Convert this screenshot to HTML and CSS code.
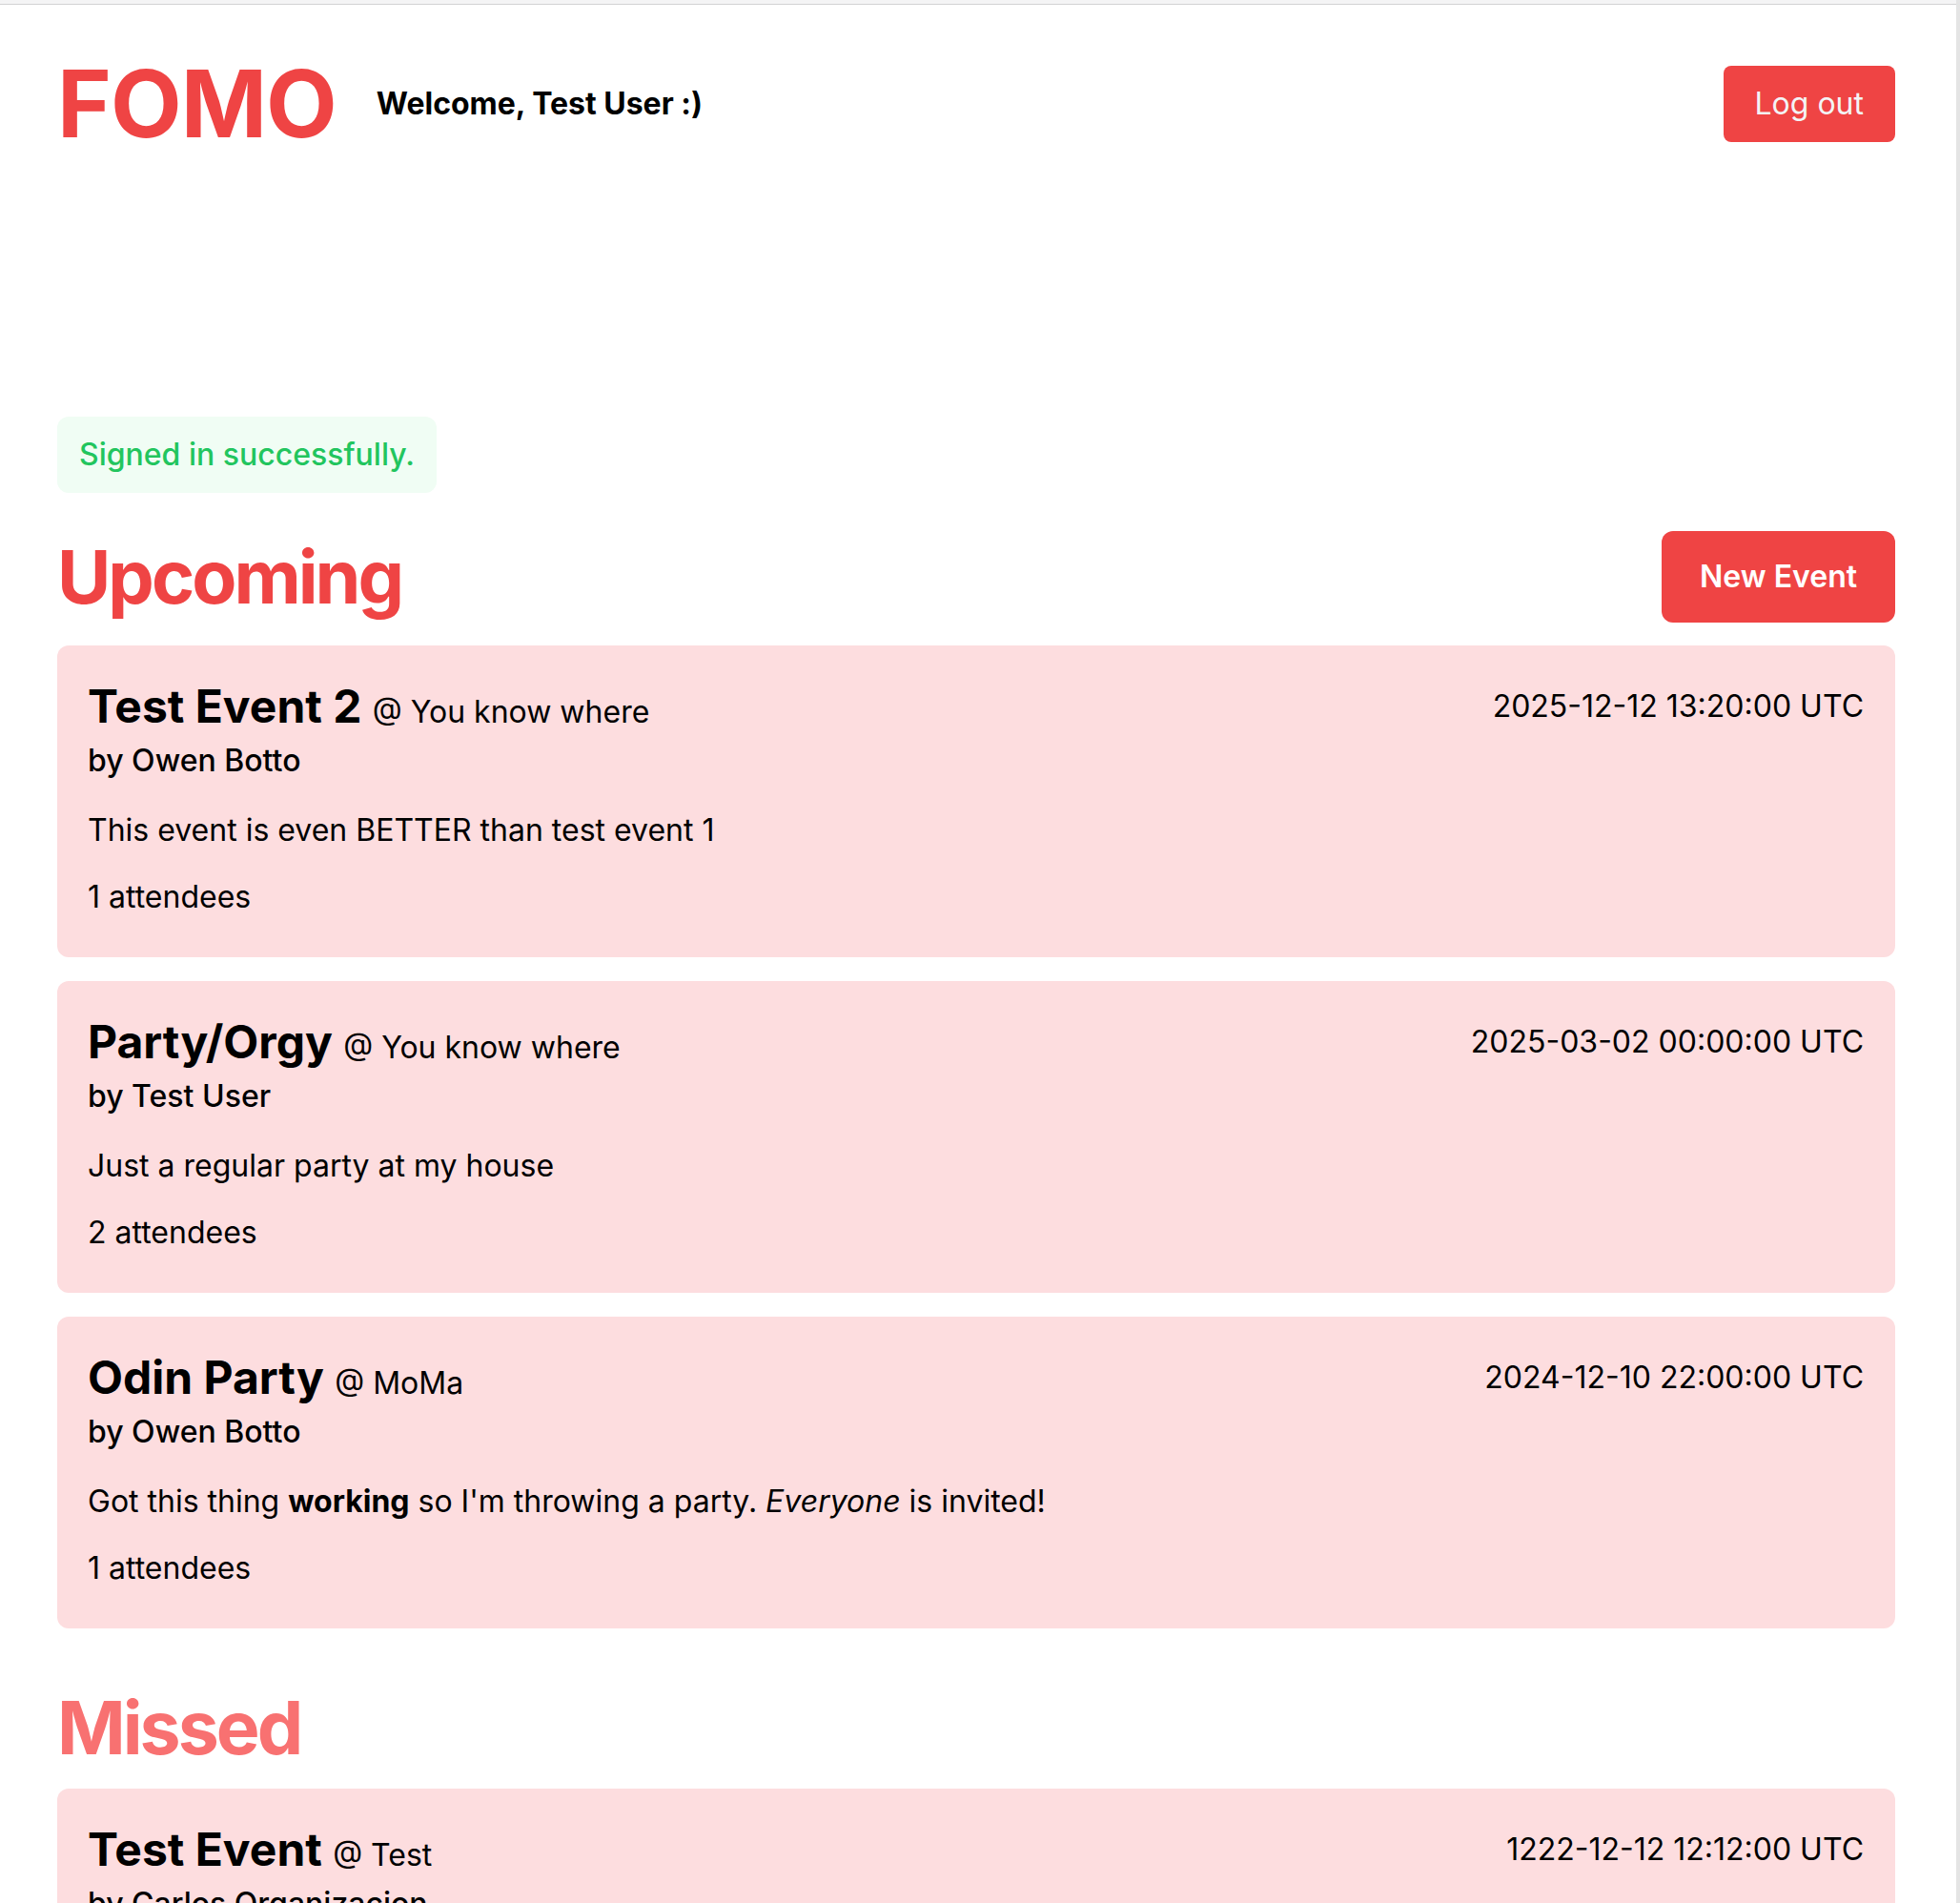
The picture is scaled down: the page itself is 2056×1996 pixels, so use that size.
FILE: index.html
```html
<!DOCTYPE html>
<html lang="en">
<head>
<meta charset="utf-8">
<title>FOMO</title>
<link rel="stylesheet" href="styles.css">
</head>
<body>
<div class="chrome-top"></div>
<div class="page">
  <header class="site-header">
    <div class="brand">
      <h1 class="logo">FOMO</h1>
      <p class="welcome">Welcome, Test User :)</p>
    </div>
    <button class="btn btn-logout">Log out</button>
  </header>

  <div class="flash">Signed in successfully.</div>

  <section class="section">
    <div class="section-head">
      <h2 class="section-title">Upcoming</h2>
      <button class="btn btn-new">New Event</button>
    </div>
    <div class="cards">
      <article class="card">
        <div class="card-head">
          <h3 class="card-title">Test Event 2 <span class="loc">@ You know where</span></h3>
          <span class="date">2025-12-12 13:20:00 UTC</span>
        </div>
        <p class="by">by Owen Botto</p>
        <p class="desc">This event is even BETTER than test event 1</p>
        <p class="att">1 attendees</p>
      </article>
      <article class="card">
        <div class="card-head">
          <h3 class="card-title">Party/Orgy <span class="loc">@ You know where</span></h3>
          <span class="date">2025-03-02 00:00:00 UTC</span>
        </div>
        <p class="by">by Test User</p>
        <p class="desc">Just a regular party at my house</p>
        <p class="att">2 attendees</p>
      </article>
      <article class="card">
        <div class="card-head">
          <h3 class="card-title">Odin Party <span class="loc">@ MoMa</span></h3>
          <span class="date">2024-12-10 22:00:00 UTC</span>
        </div>
        <p class="by">by Owen Botto</p>
        <p class="desc">Got this thing <strong>working</strong> so I'm throwing a party. <em>Everyone</em> is invited!</p>
        <p class="att">1 attendees</p>
      </article>
    </div>
  </section>

  <section class="section section-missed">
    <div class="section-head section-head-plain">
      <h2 class="section-title missed">Missed</h2>
    </div>
    <div class="cards">
      <article class="card">
        <div class="card-head">
          <h3 class="card-title">Test Event <span class="loc">@ Test</span></h3>
          <span class="date">1222-12-12 12:12:00 UTC</span>
        </div>
        <p class="by">by Carlos Organizacion</p>
      </article>
    </div>
  </section>
</div>
</body>
</html>
```

FILE: styles.css
```css
* { box-sizing: border-box; }

html, body {
  margin: 0;
  padding: 0;
  background: #ffffff;
}

body {
  font-family: Inter, "Noto Sans", "Liberation Sans", sans-serif;
  color: #000000;
  border-right: 4px solid #e4e4e4;
  min-height: 100vh;
}

.chrome-top {
  height: 5px;
  background: #f4f4f5;
  border-bottom: 1px solid #d2d2d4;
}

.page {
  padding: 0 64px 0 60px;
}

.site-header {
  display: flex;
  align-items: center;
  justify-content: space-between;
  padding-top: 55px;
}

.brand {
  display: flex;
  align-items: center;
  gap: 42px;
}

.logo {
  margin: 0;
  font-size: 97px;
  line-height: 97px;
  font-weight: 700;
  letter-spacing: -1px;
  color: #ef4444;
}

.welcome {
  margin: 0;
  font-size: 32px;
  line-height: 48px;
  font-weight: 700;
}

.btn {
  font-family: inherit;
  border: none;
  background: #ef4444;
  cursor: pointer;
  font-size: 32px;
  line-height: 48px;
}

.btn-logout {
  height: 80px;
  padding: 16px 33px;
  border-radius: 8px;
  color: #f3f4f6;
  font-weight: 400;
}

.flash {
  display: inline-block;
  margin-top: 280px;
  height: 80px;
  padding: 16px 23px;
  background: #f0fdf4;
  color: #22c55e;
  font-size: 32px;
  line-height: 48px;
  font-weight: 500;
  border-radius: 12px;
}

.section {
  margin-top: 40px;
}

.section-missed {
  margin-top: 64px;
}

.section-head {
  display: flex;
  align-items: center;
  justify-content: space-between;
  height: 96px;
}

.section-head-plain {
  height: 80px;
}

.section-title {
  margin: 0;
  font-size: 77px;
  line-height: 80px;
  font-weight: 700;
  letter-spacing: -3px;
  color: #ef4444;
}

.section-title.missed {
  color: #f87171;
}

.btn-new {
  height: 96px;
  padding: 24px 40px;
  border-radius: 12px;
  color: #ffffff;
  font-weight: 600;
}

.cards {
  display: flex;
  flex-direction: column;
  gap: 25px;
  margin-top: 24px;
}

.card {
  background: #fddddf;
  border-radius: 12px;
  padding: 34px 33px 39px 32px;
  font-size: 32px;
  line-height: 48px;
}

.card-head {
  display: flex;
  align-items: center;
  justify-content: space-between;
}

.card-title {
  margin: 0;
  font-size: 48px;
  line-height: 60px;
  font-weight: 700;
}

.loc {
  font-size: 32px;
  line-height: 32px;
  font-weight: 400;
}

.date {
  font-size: 32px;
  line-height: 48px;
  font-weight: 400;
}

.by {
  margin: 3px 0 0;
  font-weight: 500;
}

.desc {
  margin: 25px 0 0;
}

.desc strong {
  font-weight: 700;
}

.att {
  margin: 22px 0 0;
}
```
